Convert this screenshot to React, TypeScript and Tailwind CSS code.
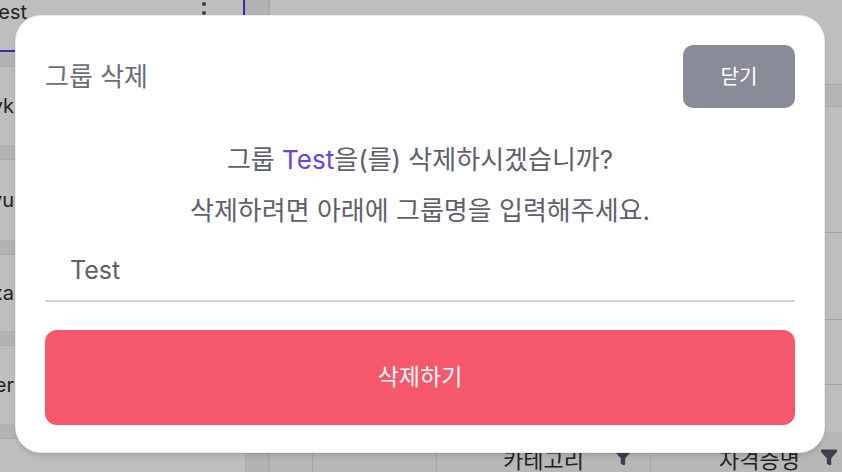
import { Filter } from 'lucide-react';

const font = { fontFamily: 'Inter, "Noto Sans CJK KR", sans-serif' };

const groups = [
  { name: 'dev-yk', h: 'h-[78px]' },
  { name: 'dev-yu', h: 'h-[80px]' },
  { name: 'dev-xa', h: 'h-[76px]' },
  { name: 'dev-er', h: 'h-[78px]' },
];

function Sidebar() {
  return (
    <aside className="flex w-[246px] shrink-0 flex-col border-r border-gray-200 bg-white">
      <div className="relative flex h-[52px] items-start border-b-2 border-r-2 border-[#5b36d6]">
        {/* label is scrolled past the left edge */}
        <div className="flex w-[27px] justify-end whitespace-nowrap">
          <span className="text-[20px] leading-6 text-[#2f2f33]">Test</span>
        </div>
        <div className="absolute left-[202px] -top-[7px] flex flex-col gap-[5px]">
          <span className="h-1 w-1 rounded-full bg-[#55566a]" />
          <span className="h-1 w-1 rounded-full bg-[#55566a]" />
          <span className="h-1 w-1 rounded-full bg-[#55566a]" />
        </div>
      </div>
      {groups.map((g) => (
        <div key={g.name}>
          <div className="h-[15px] border-b border-[#e6e6e6] bg-[#f0f0f0]" />
          <div className={`flex ${g.h} items-center`}>
            <div className="flex w-[14px] justify-end whitespace-nowrap">
              <span className="text-[20px] text-[#2f2f33]">{g.name}</span>
            </div>
          </div>
        </div>
      ))}
      <div className="h-[15px] border-b border-[#e6e6e6] bg-[#f0f0f0]" />
    </aside>
  );
}

function Main() {
  return (
    <main className="flex flex-1 flex-col">
      <div className="h-[88px] border-b border-[#dadada]" />
      <div className="h-[22px] border-b border-[#e6e6e6] bg-[#f3f3f3]" />
      <div className="h-[130px] border-b border-[#dadada]" />
      <div className="h-[90px] border-b border-[#dadada]" />
      <div className="h-[67px] border-b border-[#dadada]" />
      <div className="h-[48px]" />
      <div className="flex h-[40px] bg-[#f6f6f6] text-[22px] text-[#2f2f33]">
        <div className="w-[43px] border-r border-[#e0e0e0]" />
        <div className="w-[124px] border-r border-[#e0e0e0]" />
        <div className="flex w-[214px] items-start border-r border-[#e0e0e0] pl-[66px] pt-[14px]">
          <span className="leading-7">카테고리</span>
          <Filter size={18} className="ml-[30px] mt-[2px] fill-[#55566a] text-[#55566a]" />
        </div>
        <div className="flex flex-1 items-start pl-[68px] pt-[14px]">
          <span className="leading-7">자격증명</span>
          <Filter size={18} className="ml-[20px] mt-[2px] fill-[#55566a] text-[#55566a]" />
        </div>
      </div>
    </main>
  );
}

function DeleteGroupModal() {
  return (
    <div className="mb-[4px] mr-[2px] w-[810px] rounded-[26px] border border-[#ececec] bg-white p-[29px] pb-[27px] shadow-md">
      <div className="flex items-center justify-between">
        <h2 className="text-[26px] font-normal text-[#6b6d7a]">그룹 삭제</h2>
        <button className="h-[63px] w-[112px] rounded-[10px] bg-[#8a8b98] text-[20px] text-white">
          닫기
        </button>
      </div>

      <p className="mt-[35px] text-center text-[26px] leading-[34px] text-[#5e606d]">
        그룹 <span className="text-[#6a44e3]">Test</span>을(를) 삭제하시겠습니까?
      </p>
      <p className="mt-[17px] text-center text-[26px] leading-[34px] text-[#5e606d]">
        삭제하려면 아래에 그룹명을 입력해주세요.
      </p>

      <input
        defaultValue="Test"
        className="mt-[22px] h-[52px] w-full border-b-2 border-[#d3d3da] pb-[10px] pl-[25px] text-[25px] text-[#5e606d] outline-none"
        style={font}
      />

      <button className="mt-[28px] h-[95px] w-full rounded-[12px] bg-[#f4586a] text-[23px] text-white">
        삭제하기
      </button>
    </div>
  );
}

export default function App() {
  return (
    <div className="relative h-[472px] w-[842px] overflow-hidden bg-white" style={font}>
      <div className="flex h-full">
        <Sidebar />
        <div className="w-[24px] shrink-0 border-r-2 border-[#e4e4e4] bg-[#f0f0f0]" />
        <Main />
      </div>

      {/* Backdrop */}
      <div className="absolute inset-0 flex items-center justify-center bg-[rgba(0,0,0,0.255)]">
        <DeleteGroupModal />
      </div>
    </div>
  );
}
